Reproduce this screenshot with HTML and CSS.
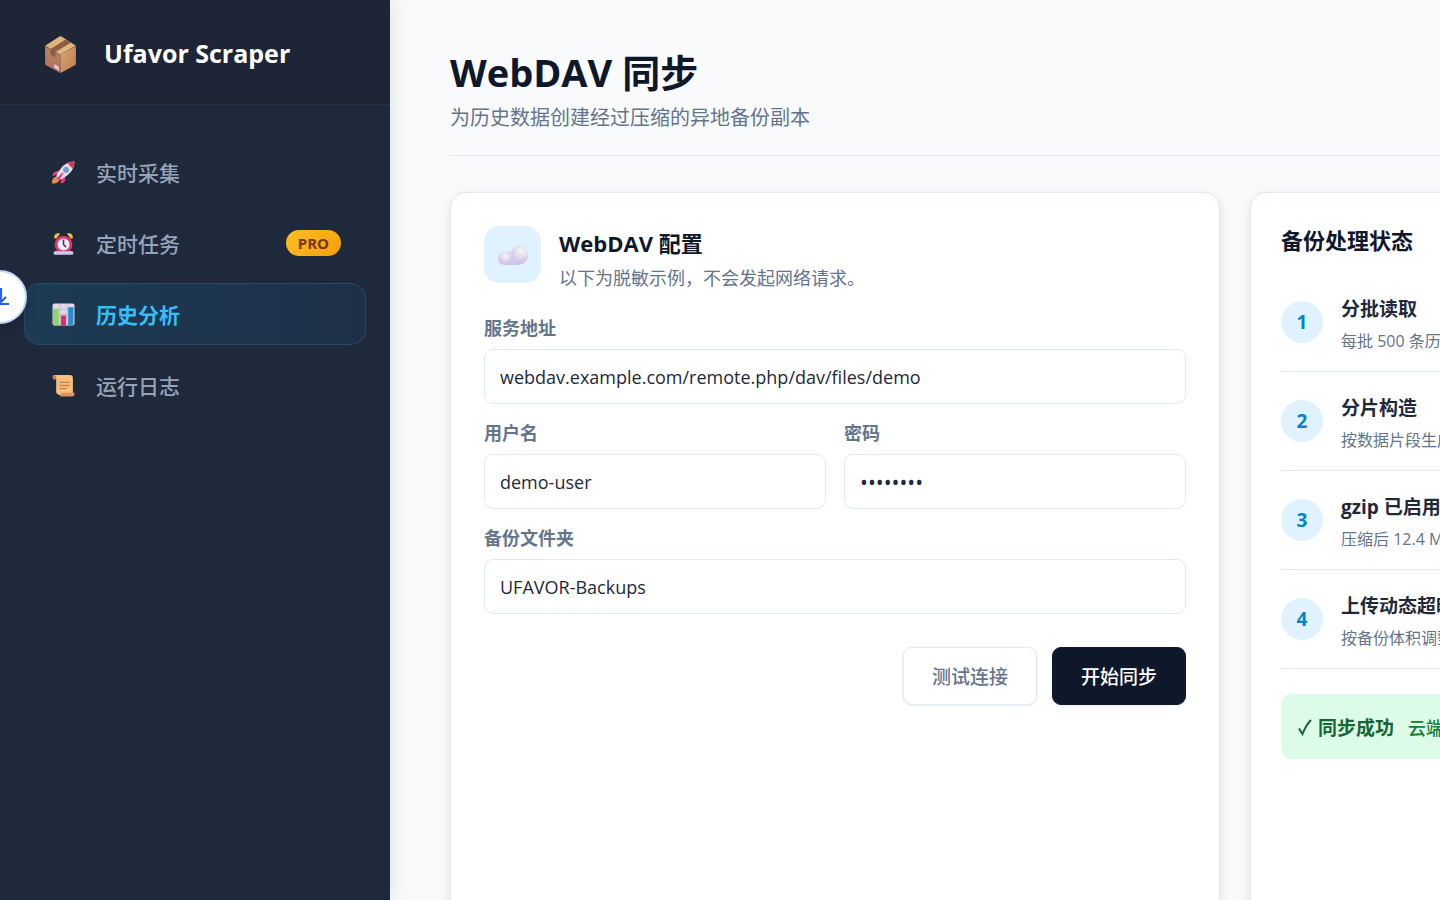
FILE: index.html
```html
<!DOCTYPE html>
<html lang="zh-CN">
<head>
<meta charset="utf-8">
<meta name="viewport" content="width=device-width, initial-scale=1">
<title>Ufavor Scraper</title>
<link rel="stylesheet" href="styles.css">
</head>
<body>
<div class="app">
  <aside class="sidebar">
    <div class="brand">
      <svg class="brand-icon" viewBox="0 0 32 36" aria-hidden="true">
        <defs>
          <linearGradient id="boxL" x1="0" y1="0" x2="0" y2="1"><stop offset="0" stop-color="#b88562"/><stop offset="1" stop-color="#ab7260"/></linearGradient>
          <linearGradient id="boxR" x1="0" y1="0" x2="1" y2="1"><stop offset="0" stop-color="#dba675"/><stop offset="1" stop-color="#bd7e4d"/></linearGradient>
        </defs>
        <path d="M1 10 16 18V36L2 28.500Q1 28 1 27Z" fill="url(#boxL)"/>
        <path d="M31 10 16 18V36L30 28.500Q31 28 31 27Z" fill="url(#boxR)"/>
        <path d="M1 9.500 15 .5Q16 0 17 .5L31 9.500 16 18Z" fill="#e0b47f"/>
        <path d="M6 13 21 3.500 26 6.500 11 15.500V21L6 18Z" fill="#8d5c48"/>
        <path d="M10 27.500 14.500 30V33.500L10 31Z" fill="#f4c6d3"/>
      </svg>
      <span class="brand-name">Ufavor Scraper</span>
    </div>
    <nav class="nav">
      <a class="nav-item" href="#live">
        <svg class="nav-icon" viewBox="0 0 22 22" aria-hidden="true">
          <path d="M7 9 2 10.500Q0 13 .5 14.500L5 13Z" fill="#e63c79"/>
          <path d="M13 15 12 20Q9.500 22 8 21L9 17Z" fill="#e63c79"/>
          <path d="M4 15Q0 15 0 21.500Q6 22 7 18Z" fill="#f08a4b"/>
          <path d="M21.500.5Q12 0 5 12L4 15 7 18 10 17Q22 10 21.500.5Z" fill="#e5dcec"/>
          <path d="M21.500.5Q18 0 15 2 17 6 20 7Q22 4 21.500.5Z" fill="#dd3656"/>
          <circle cx="13.500" cy="8.500" r="2.400" fill="#5d9bd0" stroke="#8fa5c4"/>
          <path d="M4 17 10 11 11 12 7 18Z" fill="#ec4080"/>
        </svg>
        <span>实时采集</span>
      </a>
      <a class="nav-item" href="#tasks">
        <svg class="nav-icon" viewBox="0 0 22 22" aria-hidden="true">
          <path d="M2 6Q2 0 8 1.500L4 6.500ZM20 6Q20 0 14 1.500L18 6.500Z" fill="#f5b64b"/>
          <path d="M3 18.500H19L20 21.500H2Z" fill="#c9bde0"/>
          <circle cx="11" cy="12" r="8.500" fill="#e43869"/>
          <circle cx="11" cy="12" r="5.700" fill="#f5eafa"/>
          <path d="M11 8V12L13 14" fill="none" stroke="#493a65" stroke-width="1.500" stroke-linecap="round"/>
          <path d="M3 20H19" stroke="#cfc5e4" stroke-width="3" stroke-linecap="round"/>
        </svg>
        <span>定时任务</span>
        <span class="pro">PRO</span>
      </a>
      <a class="nav-item active" href="#history" aria-current="page">
        <svg class="nav-icon" viewBox="0 0 22 22" aria-hidden="true">
          <rect x=".5" y=".5" width="21" height="21" rx="2" fill="#ded8e8"/>
          <path d="M7.500 1V21M14.500 1V21M1 6H21M1 11H21" stroke="#bcb3cc" stroke-width=".7"/>
          <path d="M1 6H6.500V21.500H3Q1 21.500 1 19Z" fill="#90d36a"/>
          <path d="M8.500 12H13.500V21.500H8.500Z" fill="#d92f6e"/>
          <path d="M15.500 4H20.500V19Q20.500 21.500 19 21.500H15.500Z" fill="#288dd0"/>
        </svg>
        <span>历史分析</span>
      </a>
      <a class="nav-item" href="#logs">
        <svg class="nav-icon" viewBox="0 0 22 22" aria-hidden="true">
          <path d="M2 1H17Q20 1 20 4V20H8Q4 20 4 17V5H1Q0 1 2 1Z" fill="#f6bf7f"/>
          <path d="M2 1Q4 1 4 5H1Q0 1 2 1Z" fill="#c77850"/>
          <path d="M9 18H21.500Q22 21.500 19 21.500H7Q9 21 9 18Z" fill="#dc955f"/>
          <path d="M7 8H17M7 11H17M7 14H14" stroke="#cc814e" stroke-width="1.200"/>
        </svg>
        <span>运行日志</span>
      </a>
    </nav>
  </aside>

  <button class="float-button" type="button" aria-label="下载">
    <svg viewBox="0 0 24 24" width="24" height="24" aria-hidden="true"><path d="M13 3V16M8 12 13 17 18 12M4 19H21" fill="none" stroke="#2563eb" stroke-width="2.200"/></svg>
  </button>

  <main class="main">
    <header class="page-head">
      <h1>WebDAV 同步</h1>
      <p>为历史数据创建经过压缩的异地备份副本</p>
    </header>
    <div class="columns">
      <section class="card">
        <div class="card-head">
          <div class="cloud-tile">
            <svg viewBox="0 0 30 20" width="30" height="20" aria-hidden="true">
              <defs>
                <linearGradient id="cloudA" x1="0" y1="0" x2="0" y2="1"><stop offset="0" stop-color="#edeaf0"/><stop offset="1" stop-color="#cfc0ed"/></linearGradient>
                <radialGradient id="cloudB" cx=".62" cy=".35" r=".65"><stop offset="0" stop-color="#f5f3f6"/><stop offset=".6" stop-color="#e3dee9"/><stop offset="1" stop-color="#d3c8eb"/></radialGradient>
              </defs>
              <path d="M7 7Q10 5 12 7 15 0 22 0 30 1 30 11 29 19 21 20H7Q0 20 0 13.500 0 8 7 7Z" fill="url(#cloudA)"/>
              <circle cx="21.500" cy="8.500" r="7.800" fill="url(#cloudB)"/>
              <circle cx="6.500" cy="12.500" r="5.500" fill="url(#cloudB)"/>
            </svg>
          </div>
          <div class="card-title">
            <h2>WebDAV 配置</h2>
            <p>以下为脱敏示例，不会发起网络请求。</p>
          </div>
        </div>
        <form class="form">
          <div class="field wide">
            <label for="server">服务地址</label>
            <input id="server" type="text" value="webdav.example.com/remote.php/dav/files/demo">
          </div>
          <div class="field">
            <label for="user">用户名</label>
            <input id="user" type="text" value="demo-user">
          </div>
          <div class="field">
            <label for="pass">密码</label>
            <input id="pass" type="password" value="password">
          </div>
          <div class="field wide">
            <label for="folder">备份文件夹</label>
            <input id="folder" type="text" value="UFAVOR-Backups">
          </div>
          <div class="actions wide">
            <button class="button" type="button">测试连接</button>
            <button class="button primary" type="button">开始同步</button>
          </div>
        </form>
      </section>

      <section class="card status">
        <h2>备份处理状态</h2>
        <ol class="steps">
          <li><span class="num">1</span><div class="step-text"><h3>分批读取</h3><p>每批 500 条历史记录</p></div></li>
          <li><span class="num">2</span><div class="step-text"><h3>分片构造</h3><p>按数据片段生成备份</p></div></li>
          <li><span class="num">3</span><div class="step-text"><h3>gzip 已启用</h3><p>压缩后 12.4 MB</p></div></li>
          <li><span class="num">4</span><div class="step-text"><h3>上传动态超时</h3><p>按备份体积调整</p></div></li>
        </ol>
        <div class="success">
          <strong><svg class="check" viewBox="0 0 14 18" aria-hidden="true"><path d="M1 10.500 4.500 16Q8 7 13 2" fill="none" stroke="currentColor" stroke-width="2"/></svg>同步成功</strong>
          <span>云端备份已更新</span>
        </div>
      </section>
    </div>
  </main>
</div>
</body>
</html>
```

FILE: styles.css
```css
* { box-sizing: border-box; }
body, h1, h2, h3, p, ol { margin: 0; padding: 0; }
body {
  font-family: "Open Sans", "Noto Sans CJK SC", sans-serif;
  color: #1e293b;
  background: #f8fafc;
}
input, button { font: inherit; }

.app { position: relative; display: flex; height: 100vh; overflow: hidden; }

.sidebar {
  flex: none;
  width: 390px;
  background: #1e293b;
  box-shadow: 4px 0 16px rgba(0, 0, 0, 0.08);
  z-index: 1;
}
.brand {
  display: flex;
  align-items: center;
  gap: 27px;
  height: 105px;
  padding: 4px 44px 0 44px;
  background: #1d2536;
  border-bottom: 1px solid #293347;
}
.brand-icon { width: 33px; height: 37px; }
.brand-name { padding-bottom: 2px; color: #fff; font-size: 25px; font-weight: 700; }

.nav { display: flex; flex-direction: column; gap: 9px; padding: 36px 24px; }
.nav-item {
  display: flex;
  align-items: center;
  height: 62px;
  padding: 0 24px 0 27px;
  border: 1px solid transparent;
  border-radius: 15px;
  color: #94a3b8;
  font-size: 21px;
  font-weight: 500;
  text-decoration: none;
}
.nav-icon { width: 23px; height: 23px; margin-right: 21px; }
.nav-item.active {
  color: #38bdf8;
  font-weight: 700;
  background: linear-gradient(90deg, #1d3b54, #1e3048);
  border-color: #264c67;
}
.pro {
  margin-left: auto;
  padding: 0 12px;
  border-radius: 13px;
  background: linear-gradient(135deg, #fbbf24, #f59e0b);
  color: #78350f;
  font-size: 15px;
  font-weight: 700;
  line-height: 26px;
}

.float-button {
  position: absolute;
  z-index: 2;
  left: -27px;
  top: 270px;
  display: grid;
  place-items: center;
  width: 54px;
  height: 54px;
  padding: 0;
  border: 2px solid #bfd3f8;
  border-radius: 50%;
  background: #fff;
  box-shadow: 0 4px 12px rgba(0, 0, 0, 0.2);
}

.main { flex: 1; min-width: 0; padding: 42px 60px 0; }
.page-head, .columns { min-width: 1330px; }
.page-head { height: 114px; border-bottom: 1px solid #e2e8f0; }
.page-head h1 { color: #0f172a; font-size: 38px; line-height: 60px; font-weight: 700; }
.page-head p { color: #64748b; font-size: 20px; line-height: 32px; }

.columns {
  display: grid;
  grid-template-columns: 77fr 53fr;
  gap: 30px;
  min-height: 100vh;
  margin-top: 36px;
}
.card {
  padding: 33px;
  border: 1px solid #e2e8f0;
  border-radius: 16px;
  background: #fff;
  box-shadow: 0 4px 12px rgba(15, 23, 42, 0.1);
}
.card h2 { color: #0f172a; font-size: 22px; line-height: 34px; font-weight: 700; }
.card-head { display: flex; gap: 18px; height: 87px; }
.cloud-tile {
  display: grid;
  place-items: center;
  flex: none;
  width: 57px;
  height: 57px;
  border-radius: 15px;
  background: #e0f2fe;
}
.card-title p { color: #64748b; font-size: 18px; line-height: 36px; }

.form { display: grid; grid-template-columns: 1fr 1fr; gap: 14px 18px; }
.wide { grid-column: 1 / -1; }
.field { display: flex; flex-direction: column; gap: 6px; }
.field label { color: #64748b; font-size: 18px; line-height: 30px; font-weight: 700; }
.field input {
  width: 100%;
  height: 55px;
  padding: 0 15px;
  border: 1px solid #e2e8f0;
  border-radius: 9px;
  background: #fff;
  color: #1e293b;
  font-size: 18px;
}
.field input[type="password"] { font-size: 21px; }
.actions { display: flex; justify-content: flex-end; gap: 15px; padding-top: 19px; }
.button {
  width: 134px;
  height: 58px;
  padding: 0;
  border: 1px solid #e2e8f0;
  border-radius: 9px;
  background: #fff;
  box-shadow: 0 1px 3px rgba(15, 23, 42, 0.08);
  color: #64748b;
  font-size: 19px;
  font-weight: 500;
}
.button.primary { border-color: #0f172a; background: #0f172a; color: #fff; }

.status { padding: 30px; }
.steps { list-style: none; margin-top: 16px; }
.steps li {
  display: flex;
  align-items: center;
  gap: 18px;
  height: 99px;
  border-bottom: 1px solid #e2e8f0;
  white-space: nowrap;
}
.num {
  width: 42px;
  border-radius: 50%;
  background: #e0f2fe;
  color: #0284c7;
  font-size: 19px;
  font-weight: 700;
  line-height: 42px;
  text-align: center;
}
.step-text { padding-top: 5px; }
.steps h3 { font-size: 19px; line-height: 32px; font-weight: 700; }
.steps p { color: #64748b; font-size: 16px; line-height: 32px; }
.success {
  display: flex;
  align-items: center;
  gap: 14px;
  height: 65px;
  margin-top: 25px;
  padding: 0 17px;
  border-radius: 10px;
  background: #dcfce7;
  color: #15803d;
  font-size: 18px;
  font-weight: 500;
  white-space: nowrap;
}
.success strong { display: flex; align-items: center; gap: 6px; color: #166534; font-size: 19px; }
.check { width: 14px; height: 18px; }
```
